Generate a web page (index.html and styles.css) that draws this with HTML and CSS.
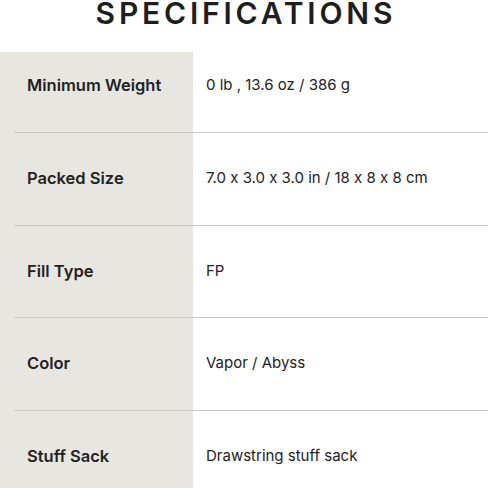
FILE: index.html
```html
<!DOCTYPE html>
<html lang="en">
<head>
<meta charset="utf-8">
<title>Specifications</title>
<link rel="stylesheet" href="styles.css">
</head>
<body>
<h1 class="title">SPECIFICATIONS</h1>
<div class="specs">
  <div class="row row-first">
    <div class="label">Minimum Weight</div>
    <div class="value">0 lb , 13.6 oz / 386 g</div>
  </div>
  <div class="row">
    <div class="label">Packed Size</div>
    <div class="value">7.0 x 3.0 x 3.0 in / 18 x 8 x 8 cm</div>
  </div>
  <div class="row">
    <div class="label">Fill Type</div>
    <div class="value">FP</div>
  </div>
  <div class="row">
    <div class="label">Color</div>
    <div class="value">Vapor / Abyss</div>
  </div>
  <div class="row row-last">
    <div class="label">Stuff Sack</div>
    <div class="value">Drawstring stuff sack</div>
  </div>
</div>
</body>
</html>
```
FILE: styles.css
```css
html, body {
  margin: 0;
  padding: 0;
  background: #ffffff;
}
body {
  width: 488px;
  height: 488px;
  overflow: hidden;
  font-family: Inter, "Noto Sans", sans-serif;
  font-feature-settings: "calt" 0;
  color: #222222;
}
.title {
  margin: 0;
  height: 52px;
  font-family: Inter, "Liberation Sans", sans-serif;
  font-weight: 600;
  font-size: 30px;
  line-height: 26px;
  letter-spacing: 3.8px;
  text-indent: 3.8px;
  text-align: center;
  color: #1e1e1e;
}
.specs {
  background: linear-gradient(to right, #e8e6e1 0, #e8e6e1 193px, #ffffff 193px);
  padding-left: 14px;
  height: 436px;
}
.row {
  display: grid;
  grid-template-columns: 179px 1fr;
  box-sizing: border-box;
  height: 92.5px;
  padding-top: 35px;
  border-bottom: 1px solid #c9c9c9;
}
.row-first {
  height: 81px;
  padding-top: 23px;
}
.row-last {
  border-bottom: none;
  height: 76px;
}
.label {
  padding-left: 13px;
  font-weight: 600;
  font-size: 16.5px;
  line-height: 20px;
}
.value {
  padding-left: 13px;
  font-weight: 400;
  font-size: 15px;
  line-height: 20px;
}
```
